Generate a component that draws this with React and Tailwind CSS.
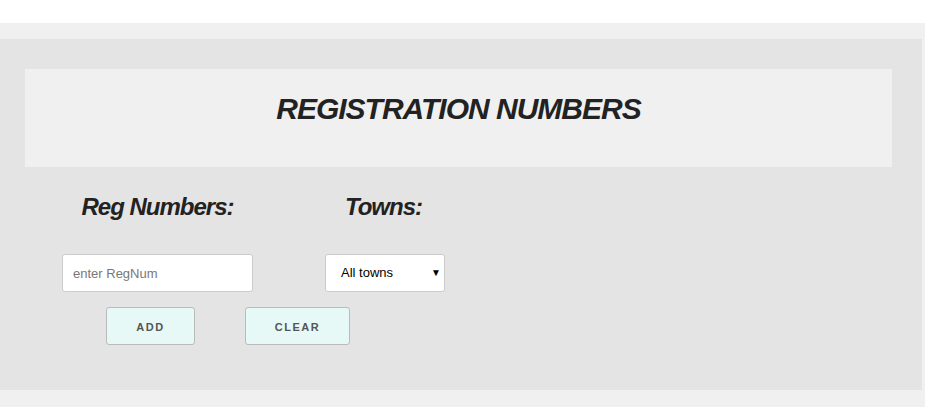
import React from "react";

export default function App() {
  const font = { fontFamily: '"Liberation Sans", Arial, sans-serif' };

  return (
    <div className="min-h-screen w-full bg-white pt-[23px]" style={font}>
      <div className="bg-[#f0f0f0] pt-[16px] pb-[17px] pr-[3px]">
        <div className="h-[351px] bg-[#e4e4e4] pl-[25px] pr-[30px] pt-[30px]">
          <div className="flex h-[98px] justify-center bg-[#f0f0f0] pt-[23px]">
            <h1 className="text-[30px] leading-[34px] font-bold italic tracking-[-1px] text-[#222]">
              REGISTRATION NUMBERS
            </h1>
          </div>

          <div className="mt-[25px] flex">
            <div className="ml-[37px] flex w-[191px] flex-col items-center">
              <h2 className="text-[24px] leading-[30px] font-bold italic tracking-[-1px] text-[#222]">
                Reg Numbers:
              </h2>
              <input
                placeholder="enter RegNum"
                className="mt-[32px] h-[38px] w-[191px] rounded-[3px] border border-[#ccc] bg-white px-[10px] text-[13px] text-black placeholder:text-[#777] outline-none"
              />
            </div>
            <div className="ml-[72px] flex w-[120px] flex-col items-center">
              <h2 className="pr-[3px] text-[24px] leading-[30px] font-bold italic tracking-[-1px] text-[#222]">
                Towns:
              </h2>
              <div className="relative mt-[32px] flex h-[38px] w-[120px] items-center rounded-[3px] border border-[#ccc] bg-white pl-[15px] text-[13px] text-black">
                All towns
                <span className="absolute right-[3px] top-[10px] text-[10px]">▼</span>
              </div>
            </div>
          </div>

          <div className="mt-[15px] flex">
            <button className="ml-[81px] h-[38px] w-[89px] rounded-[3px] border border-[#bbb] bg-[#e6f9f6] pt-[2px] text-[11px] font-bold tracking-[1.5px] text-[#555]">
              ADD
            </button>
            <button className="ml-[50px] h-[38px] w-[105px] rounded-[3px] border border-[#bbb] bg-[#e6f9f6] pt-[2px] text-[11px] font-bold tracking-[1.5px] text-[#555]">
              CLEAR
            </button>
          </div>
        </div>
      </div>
    </div>
  );
}
